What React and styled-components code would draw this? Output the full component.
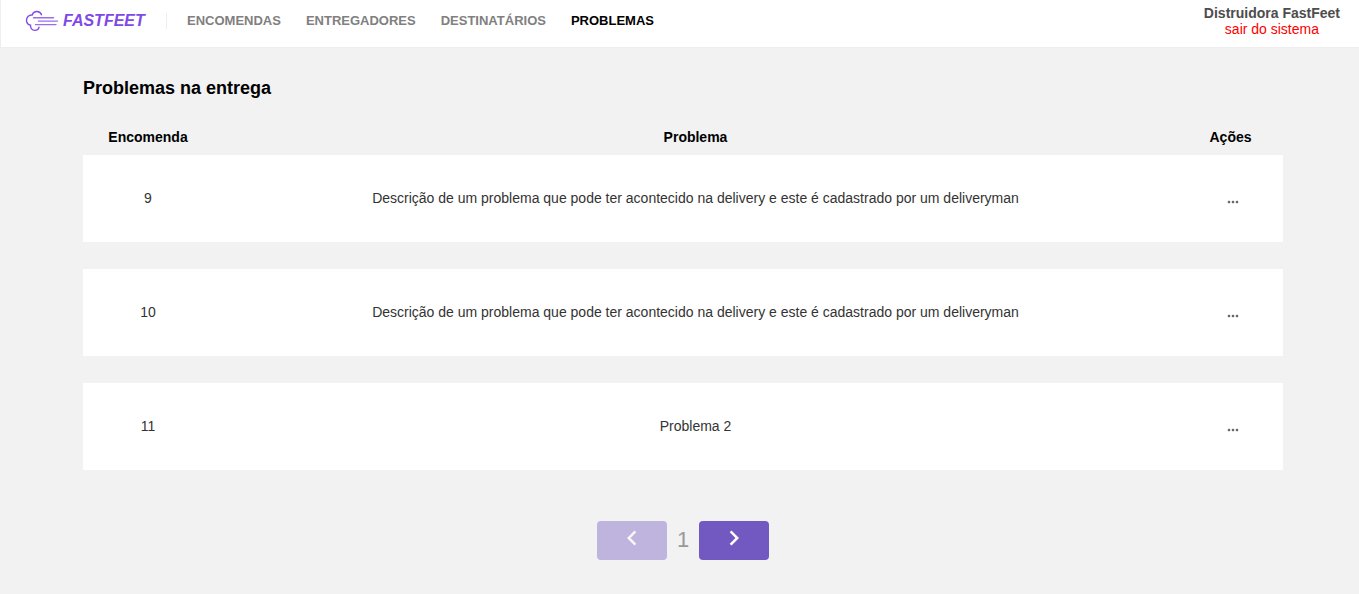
import React from 'react';
import styled, { createGlobalStyle } from 'styled-components';
import { MdChevronLeft, MdChevronRight, MdMoreHoriz } from 'react-icons/md';

const GlobalStyle = createGlobalStyle`
  * { margin: 0; padding: 0; box-sizing: border-box; }
  body {
    background: #f2f2f2;
    font: 14px/16px "Liberation Sans", Arial, sans-serif;
    color: #333;
  }
  button { font: inherit; cursor: pointer; border: 0; }
`;

const Header = styled.header`
  display: flex;
  align-items: flex-start;
  justify-content: space-between;
  height: 48px;
  padding: 0 19px 0 24px;
  background: #fff;
  border-left: 1px solid #eee;
  border-bottom: 1px solid #eee;
`;

const Brand = styled.div`
  display: flex;
  align-items: center;
  padding-top: 5px;
`;

const Logo = styled.a`
  display: flex;
  align-items: center;
  gap: 4px;
  width: 121px;
  height: 32px;
  color: #8048e8;
  font-size: 16px;
  font-weight: bold;
  font-style: italic;
  text-decoration: none;
`;

const Nav = styled.nav`
  display: flex;
  align-items: center;
  gap: 25px;
  height: 16px;
  margin-left: 20px;
  padding-left: 20px;
  border-left: 1px solid #eee;
`;

const NavLink = styled.a`
  color: ${({ $active }) => ($active ? '#000' : '#808080')};
  font-size: 13px;
  font-weight: bold;
  text-decoration: none;
`;

const Profile = styled.div`
  display: flex;
  flex-direction: column;
  align-items: center;
  padding-top: 5px;
`;

const UserName = styled.strong`
  color: #4d4d4d;
`;

const Logout = styled.button`
  background: none;
  color: #f00;
`;

const Main = styled.main`
  padding: 30px 76px 34px 83px;
`;

const Title = styled.h1`
  color: #000;
  font-size: 18px;
  line-height: 20px;
`;

const Table = styled.table`
  width: 100%;
  margin-top: 20px;
  border-spacing: 0;
  table-layout: fixed;
`;

const HeadCell = styled.th`
  width: ${({ $width }) => $width || 'auto'};
  height: 37px;
  color: #000;
`;

const Cell = styled.td`
  height: 114px;
  padding-bottom: 2px;
  background: #fff;
  border-bottom: 27px solid #f2f2f2;
  text-align: center;
`;

const MoreButton = styled.button`
  padding: 12px 0 0 4px;
  background: none;
  color: #666;
  svg { display: block; }
`;

const Pagination = styled.div`
  display: flex;
  align-items: center;
  justify-content: center;
  gap: 10px;
  margin-top: 24px;
  color: #999;
  font-size: 22px;
`;

const PageNumber = styled.span`
  padding-bottom: 2px;
`;

const PageButton = styled.button`
  display: flex;
  justify-content: center;
  width: 70px;
  height: 39px;
  padding-top: 2px;
  background: #7159c1;
  border-radius: 4px;
  color: #fff;
  &:disabled { opacity: 0.4; cursor: default; }
`;

const links = ['ENCOMENDAS', 'ENTREGADORES', 'DESTINATÁRIOS', 'PROBLEMAS'];
const description =
  'Descrição de um problema que pode ter acontecido na delivery e este é cadastrado por um deliveryman';
const problems = [
  { order: 9, text: description },
  { order: 10, text: description },
  { order: 11, text: 'Problema 2' },
];

function CloudMark() {
  return (
    <svg width="34" height="22" viewBox="0 0 34 22" fill="none" stroke="currentColor" strokeWidth="1.4" strokeLinecap="round" aria-hidden="true">
      <path d="M16.5 4.8C15.6 2.6 14 1.5 12 1.5C9.6 1.5 7.9 2.9 7.2 5.1C3.7 4.8 1.5 7.2 1.5 10.2C1.5 12.7 3.1 14.6 5.5 15.1C5.2 18.2 7 20.4 9.8 20.4C12 20.4 13.6 19.2 14 17.2" />
      <path d="M8.5 7.8H28.5M13.5 11.1H32.5M10.5 14.6H31" strokeOpacity="0.8" />
    </svg>
  );
}

export default function App() {
  return (
    <>
      <GlobalStyle />
      <Header>
        <Brand>
          <Logo href="#">
            <CloudMark />
            <span>FASTFEET</span>
          </Logo>
          <Nav>
            {links.map((label) => (
              <NavLink key={label} href="#" $active={label === 'PROBLEMAS'}>{label}</NavLink>
            ))}
          </Nav>
        </Brand>
        <Profile>
          <UserName>Distruidora FastFeet</UserName>
          <Logout type="button">sair do sistema</Logout>
        </Profile>
      </Header>
      <Main>
        <Title>Problemas na entrega</Title>
        <Table>
          <thead>
            <tr>
              <HeadCell scope="col" $width="130px">Encomenda</HeadCell>
              <HeadCell scope="col">Problema</HeadCell>
              <HeadCell scope="col" $width="105px">Ações</HeadCell>
            </tr>
          </thead>
          <tbody>
            {problems.map(({ order, text }) => (
              <tr key={order}>
                <Cell>{order}</Cell>
                <Cell>{text}</Cell>
                <Cell>
                  <MoreButton type="button" aria-label="Ações">
                    <MdMoreHoriz size={16} />
                  </MoreButton>
                </Cell>
              </tr>
            ))}
          </tbody>
        </Table>
        <Pagination>
          <PageButton type="button" disabled aria-label="Página anterior">
            <MdChevronLeft size={30} />
          </PageButton>
          <PageNumber>1</PageNumber>
          <PageButton type="button" aria-label="Próxima página">
            <MdChevronRight size={30} />
          </PageButton>
        </Pagination>
      </Main>
    </>
  );
}
